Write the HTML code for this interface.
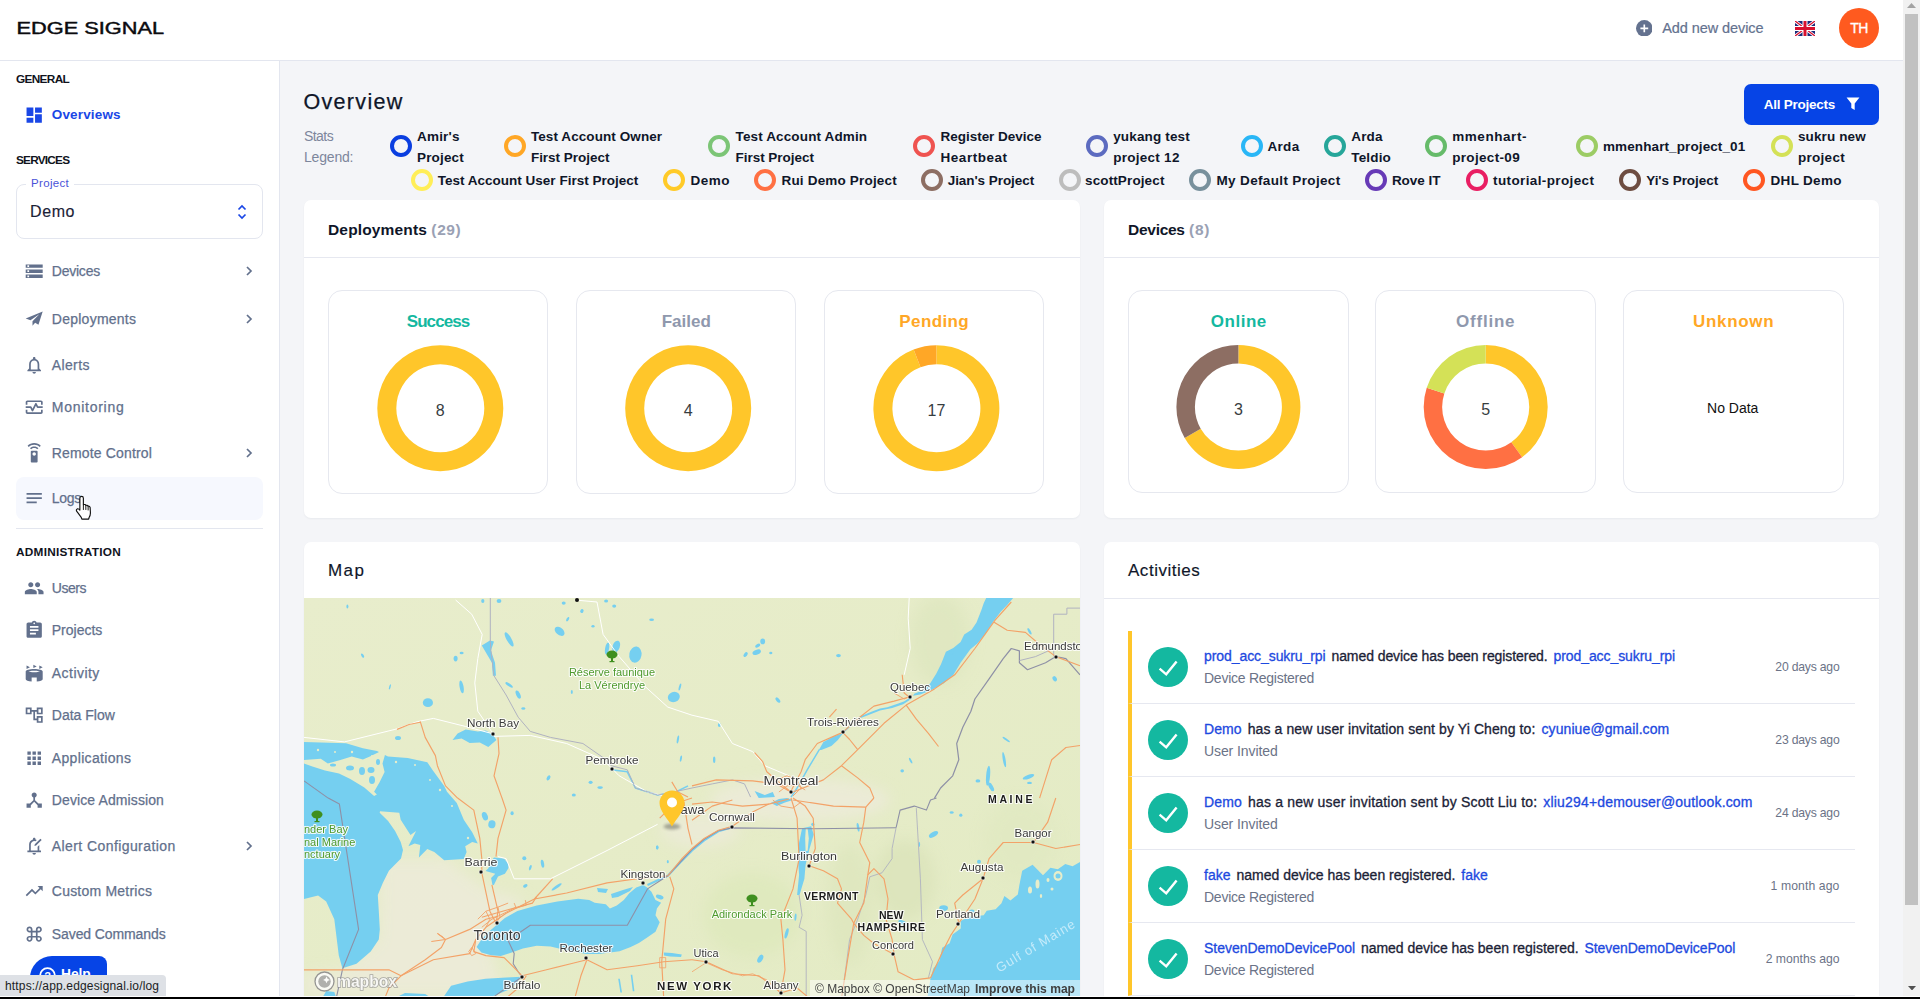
<!DOCTYPE html>
<html lang="en">
<head>
<meta charset="utf-8">
<title>Edge Signal - Overview</title>
<style>
*{box-sizing:border-box;margin:0;padding:0}
html,body{width:1920px;height:999px;overflow:hidden;background:#f4f5f8;font-family:"Liberation Sans",sans-serif;color:#0f1629}
body{position:relative}
a{text-decoration:none;color:#1d49e0}
span,b,a{white-space:nowrap}
.abs{position:absolute}
/* header */
#hdr{position:absolute;left:0;top:0;width:1903px;height:61px;background:#fff;border-bottom:1px solid #e3e6ef}
#logo{position:absolute;left:16px;top:18px}
#add{position:absolute;left:1635.700px;top:19px;height:18px;display:flex;align-items:center;color:#64728f;font-size:14.500px;-webkit-text-stroke:.2px #64728f}
#add svg{margin-right:10px}
#flag{position:absolute;left:1795px;top:21px}
#ava{position:absolute;left:1839px;top:8px;width:40px;height:40px;border-radius:50%;background:#ff5a1f;color:#fff;font-size:14px;text-align:center;line-height:40px;-webkit-text-stroke:.3px #fff}
/* sidebar */
#side{position:absolute;left:0;top:61px;width:280px;height:938px;background:#fff;border-right:1px solid #e3e6ef}
.sec{position:absolute;left:16px;font-size:11.800px;font-weight:700;line-height:14px;color:#10131c}
.it{position:absolute;left:16px;width:247px;height:42px;border-radius:8px;color:#62708c;font-size:14px;-webkit-text-stroke:.25px #62708c}
.it svg.ic{position:absolute;left:7.800px;top:10.900px;width:20.400px;height:20.400px;fill:#62708c}
.it span{position:absolute;left:35.800px;top:11.700px;line-height:18px;white-space:nowrap}
.it svg.ch{position:absolute;left:225.700px;top:14px;width:14px;height:14px;fill:none;stroke:#62708c;stroke-width:1.700}
.it.act{color:#1a47e6;font-weight:700;font-size:13.500px;-webkit-text-stroke:0}
.it.act svg.ic{fill:#1a47e6}
.it.hov{background:#f6f8fe;height:43px}
#proj{position:absolute;left:16px;top:123px;width:247px;height:55px;border:1px solid #e3e6ef;border-radius:8px}
#proj .lb{position:absolute;left:9px;top:-8px;background:#fff;padding:0 5px;font-size:11.500px;color:#4a52d8}
#proj .val{position:absolute;left:13px;top:18px;font-size:16px;color:#1b2236;-webkit-text-stroke:.15px #1b2236}
#help{position:absolute;left:30px;top:895px;width:77px;height:50px;border-radius:22px 8px 0 0;background:#0644e6;color:#fff;font-weight:700;font-size:13.800px}
#help svg{position:absolute;left:9px;top:11px}
#help span{position:absolute;left:31px;top:11px}
#url{position:absolute;left:0;top:914px;width:166px;height:22px;background:#dee1e6;border-radius:0 4px 0 0;font-size:12px;line-height:22px;padding-left:5px;color:#202124;white-space:nowrap}
/* main */
h1{position:absolute;left:303.500px;top:86.700px;font-size:21.500px;font-weight:400;color:#0f1629;line-height:30px;-webkit-text-stroke:.25px #0f1629}
#allp{position:absolute;left:1744px;top:84px;width:135px;height:41px;border-radius:7px;background:#0644e6;color:#fff;font-size:13.500px;font-weight:700}
#allp span{position:absolute;left:19.700px;top:12px;line-height:17px}
.card{position:absolute;background:#fff;border-radius:7px;box-shadow:0 1px 2px rgba(20,30,60,.05)}
.card .hd{position:absolute;left:24px;top:19.800px;font-size:15.500px;line-height:20px;color:#0f1629}
.card .hr{position:absolute;left:0;right:0;top:57px;height:1px;background:#e6e8f0}
.mini{position:absolute;top:90px;width:220px;height:203px;border:1px solid #e6e8ef;border-radius:14px}
.mini .t{position:absolute;left:0;right:0;top:19.700px;text-align:center;font-size:17px;font-weight:700;line-height:22px}
.mini svg{position:absolute;left:0;top:0}
.g{color:#14b8a0}.gr{color:#8f98ad}.o{color:#ffa726}
.lg0{position:absolute;font-size:14px;line-height:21px;color:#7d869c}
.lg{position:absolute;font-size:13.500px;font-weight:700;line-height:21.300px;color:#0f1629;white-space:nowrap}
.ring{position:absolute;width:22px;height:22px;border-radius:50%;border:4.200px solid #000}
.cnt{color:#9aa1b4}
.hd2{position:absolute;left:24px;top:18px;font-size:17px;line-height:22px;color:#0f1629;-webkit-text-stroke:.15px #0f1629}
.av{position:absolute;left:1128px;width:727px;height:73px;border-left:4px solid #ffc62a;border-bottom:1px solid #e6e8f0}
.av .ck{position:absolute;left:16px;top:16px}
.av .l1{position:absolute;left:72px;top:16px;font-size:14px;line-height:18px;color:#1b2236;white-space:nowrap;-webkit-text-stroke:.3px}
.av .l1 .a1{margin-right:2px}.av .l1 .a2{margin-left:2px}
.av .l2{position:absolute;left:72px;top:38px;font-size:14px;line-height:18px;color:#6b7387;white-space:nowrap}
.av .tm{position:absolute;right:15.500px;top:26.800px;font-size:12.200px;line-height:18px;color:#6b7387;white-space:nowrap}
/* scrollbar */
#sb{position:absolute;left:1903px;top:0;width:17px;height:997px;background:#f1f1f1}
#sb .th{position:absolute;left:2px;top:13.500px;width:13px;height:891.500px;background:#c1c1c1}
#bar{position:absolute;left:0;top:996px;width:1920px;height:3px;background:#000;border-top:1px solid #fff}
</style>
<style id="fit">
#g0{letter-spacing:-0.648px}
#g1{letter-spacing:-0.765px}
#g2{letter-spacing:0.257px}
#s0{letter-spacing:0.157px}
#s1{letter-spacing:-0.233px}
#s2{letter-spacing:0.250px}
#s3{letter-spacing:0.361px}
#s4{letter-spacing:0.725px}
#s5{letter-spacing:0.158px}
#s6{letter-spacing:-0.286px}
#s7{letter-spacing:-0.491px}
#s8{letter-spacing:-0.011px}
#s9{letter-spacing:0.451px}
#s10{letter-spacing:0.009px}
#s11{letter-spacing:0.327px}
#s12{letter-spacing:0.107px}
#s13{letter-spacing:0.414px}
#s14{letter-spacing:0.220px}
#s15{letter-spacing:-0.098px}
#hp{letter-spacing:-0.069px}
#ur{letter-spacing:0.162px}
#h1{letter-spacing:1.313px}
#ap{letter-spacing:-0.235px}
#st0{letter-spacing:-0.552px}
#st1{letter-spacing:-0.185px}
#l0a{letter-spacing:0.163px}
#l0b{letter-spacing:0.136px}
#l1a{letter-spacing:0.083px}
#l1b{letter-spacing:-0.007px}
#l2a{letter-spacing:0.137px}
#l2b{letter-spacing:-0.023px}
#l3a{letter-spacing:-0.022px}
#l3b{letter-spacing:0.540px}
#l4a{letter-spacing:0.157px}
#l4b{letter-spacing:0.269px}
#l5a{letter-spacing:0.311px}
#l6a{letter-spacing:0.145px}
#l6b{letter-spacing:0.150px}
#l7a{letter-spacing:0.567px}
#l7b{letter-spacing:0.330px}
#l8a{letter-spacing:0.105px}
#l9a{letter-spacing:0.115px}
#l9b{letter-spacing:0.281px}
#l10a{letter-spacing:0.010px}
#l11a{letter-spacing:0.461px}
#l12a{letter-spacing:0.178px}
#l13a{letter-spacing:-0.058px}
#l14a{letter-spacing:0.124px}
#l15a{letter-spacing:0.348px}
#l16a{letter-spacing:-0.044px}
#l17a{letter-spacing:0.382px}
#l18a{letter-spacing:-0.045px}
#l19a{letter-spacing:0.319px}
#c0{letter-spacing:0.156px}
#c1{letter-spacing:0.607px}
#c2{letter-spacing:-0.268px}
#c3{letter-spacing:0.773px}
#c4{letter-spacing:1.411px}
#c5{letter-spacing:0.525px}
#m0{letter-spacing:-0.917px}
#m1{letter-spacing:0.015px}
#m2{letter-spacing:0.373px}
#m3{letter-spacing:0.519px}
#m4{letter-spacing:0.776px}
#m5{letter-spacing:0.700px}
#a0{letter-spacing:-0.075px}
#a1{letter-spacing:0.097px}
#a2{letter-spacing:0.174px}
#a3{letter-spacing:0.007px}
#a4{letter-spacing:-0.034px}
#b0{letter-spacing:-0.256px}
#b1{letter-spacing:-0.091px}
#b2{letter-spacing:-0.091px}
#b3{letter-spacing:-0.256px}
#b4{letter-spacing:-0.256px}
#t0{letter-spacing:-0.202px}
#t1{letter-spacing:-0.202px}
#t2{letter-spacing:-0.202px}
#t3{letter-spacing:0.103px}
#t4{letter-spacing:-0.005px}
#ad{letter-spacing:-0.083px}
#th{letter-spacing:-0.672px}
#pl{letter-spacing:0.334px}
#pv{letter-spacing:0.604px}
</style>
</head>
<body>
<div id="hdr">
 <svg id="logo" width="152" height="20" viewBox="0 0 152 20"><text x="0.5" y="15.5" font-family="Liberation Sans, sans-serif" font-size="17" fill="#0b0b0f" stroke="#0b0b0f" stroke-width=".45" textLength="147.500" lengthAdjust="spacingAndGlyphs">EDGE SIGNAL</text></svg>
 <div id="add"><svg width="16.600" height="16.600" viewBox="0 0 17 17"><circle cx="8.500" cy="8.500" r="8.500" fill="#64728f"/><path d="M8.500 4.500v8M4.500 8.500h8" stroke="#fff" stroke-width="1.700"/></svg><span id="ad">Add new device</span></div>
 <svg id="flag" width="20" height="15" viewBox="0 0 60 45"><rect width="60" height="45" fill="#1b2a7a"/><path d="M0 0L60 45M60 0L0 45" stroke="#fff" stroke-width="9"/><path d="M0 0L60 45M60 0L0 45" stroke="#d8102e" stroke-width="4"/><path d="M30 0V45M0 22.500H60" stroke="#fff" stroke-width="15"/><path d="M30 0V45M0 22.500H60" stroke="#d8102e" stroke-width="9"/></svg>
 <div id="ava"><span id="th">TH</span></div>
</div>
<div id="side">
<!--SIDE-->
<div class="sec" style="top:11px"><span id="g0">GENERAL</span></div>
<div class="sec" style="top:92px"><span id="g1">SERVICES</span></div>
<div id="proj"><div class="lb"><span id="pl">Project</span></div><div class="val"><span id="pv">Demo</span></div><svg class="abs" style="left:219px;top:18px" width="12" height="18" viewBox="0 0 12 18"><path d="M2.500 6.500L6 3l3.500 3.500M2.500 11.500L6 15l3.500-3.500" fill="none" stroke="#1a47e6" stroke-width="1.7"/></svg></div>
<div class="abs" style="left:16px;top:467px;width:247px;height:1px;background:#e3e6ef"></div>
<div class="sec" style="top:484px"><span id="g2">ADMINISTRATION</span></div>
<div class="it act" style="top:33px"><svg class="ic" viewBox="0 0 24 24"><path d="M3 13h8V3H3v10zm0 8h8v-6H3v6zm10 0h8V11h-8v10zm0-18v6h8V3h-8z"/></svg><span id="s0">Overviews</span></div>
<div class="it " style="top:189px"><svg class="ic" viewBox="0 0 24 24"><path d="M2 20h20v-4H2v4zm2-3h2v2H4v-2zM2 4v4h20V4H2zm4 3H4V5h2v2zm-4 7h20v-4H2v4zm2-3h2v2H4v-2z"/></svg><span id="s1">Devices</span><svg class="ch" viewBox="0 0 14 14"><path d="M5 3l4 4-4 4"/></svg></div>
<div class="it " style="top:237px"><svg class="ic" viewBox="0 0 24 24"><path d="M22 3L2 11.2l5.6 2.1L18 6.2l-8 8.1v5.5l3.1-3.6 3.9 2.3z"/></svg><span id="s2">Deployments</span><svg class="ch" viewBox="0 0 14 14"><path d="M5 3l4 4-4 4"/></svg></div>
<div class="it " style="top:283px"><svg class="ic" viewBox="0 0 24 24"><path d="M12 22c1.1 0 2-.9 2-2h-4c0 1.1.9 2 2 2zm6-6v-5c0-3.07-1.63-5.64-4.5-6.32V4c0-.83-.67-1.500-1.500-1.500S10.500 3.170 10.500 4v.68C7.640 5.360 6 7.920 6 11v5l-2 2v1h16v-1l-2-2zm-2 1H8v-6c0-2.480 1.510-4.500 4-4.500s4 2.020 4 4.500v6z"/></svg><span id="s3">Alerts</span></div>
<div class="it " style="top:325px"><svg class="ic" viewBox="0 0 24 24"><path d="M20 4H4c-1.100 0-2 .9-2 2v3h2V6h16v3h2V6c0-1.100-.9-2-2-2zm0 14H4v-3H2v3c0 1.100.9 2 2 2h16c1.100 0 2-.9 2-2v-3h-2v3zM14.890 7.550c-.340-.680-1.450-.680-1.790 0L10 13.760l-1.110-2.210A.988.988 0 008 11H2v2h5.380l1.720 3.450c.18.340.52.550.9.550s.72-.210.890-.550L14 10.240l1.110 2.210c.17.340.51.550.890.550h6v-2h-5.380l-1.730-3.450z"/></svg><span id="s4">Monitoring</span></div>
<div class="it " style="top:371px"><svg class="ic" viewBox="0 0 24 24"><path d="M15 9H9c-.55 0-1 .45-1 1v12c0 .55.45 1 1 1h6c.55 0 1-.45 1-1V10c0-.55-.45-1-1-1zm-3 6c-1.100 0-2-.9-2-2s.9-2 2-2 2 .9 2 2-.9 2-2 2zM7.050 6.050l1.410 1.410C9.370 6.560 10.620 6 12 6s2.630.560 3.540 1.460l1.410-1.410C15.680 4.780 13.930 4 12 4s-3.680.780-4.950 2.050zM12 0C8.960 0 6.210 1.230 4.220 3.220l1.410 1.410C7.260 3.010 9.510 2 12 2s4.740 1.010 6.360 2.640l1.410-1.410C17.790 1.230 15.040 0 12 0z"/></svg><span id="s5">Remote Control</span><svg class="ch" viewBox="0 0 14 14"><path d="M5 3l4 4-4 4"/></svg></div>
<div class="it hov" style="top:416px"><svg class="ic" viewBox="0 0 24 24"><path d="M3 18h12v-2H3v2zM3 6v2h18V6H3zm0 7h18v-2H3v2z"/></svg><span id="s6">Logs</span></div>
<div class="it " style="top:506px"><svg class="ic" viewBox="0 0 24 24"><path d="M16 11c1.660 0 2.990-1.340 2.990-3S17.660 5 16 5c-1.660 0-3 1.340-3 3s1.340 3 3 3zm-8 0c1.660 0 2.990-1.340 2.990-3S9.660 5 8 5C6.340 5 5 6.340 5 8s1.340 3 3 3zm0 2c-2.330 0-7 1.170-7 3.500V19h14v-2.500c0-2.330-4.670-3.500-7-3.500zm8 0c-.29 0-.62.020-.970.050 1.160.840 1.970 1.970 1.970 3.450V19h6v-2.500c0-2.330-4.670-3.500-7-3.500z"/></svg><span id="s7">Users</span></div>
<div class="it " style="top:548px"><svg class="ic" viewBox="0 0 24 24"><path d="M19 3h-4.180C14.400 1.840 13.300 1 12 1c-1.300 0-2.400.840-2.820 2H5c-1.100 0-2 .9-2 2v14c0 1.100.9 2 2 2h14c1.100 0 2-.9 2-2V5c0-1.100-.9-2-2-2zm-7 0c.55 0 1 .45 1 1s-.45 1-1 1-1-.45-1-1 .45-1 1-1zm2 14H7v-2h7v2zm3-4H7v-2h10v2zm0-4H7V7h10v2z"/></svg><span id="s8">Projects</span></div>
<div class="it " style="top:591px"><svg class="ic" viewBox="0 0 24 24"><path d="M7 5L3 7V3l4 2zm11-2v4l4-2-4-2zm-7-1v4l4-2-4-2zm-6 8.040C6.380 10.530 8.770 11 12 11s5.620-.470 7-.960C19 9.860 16.220 9 12 9s-7 .860-7 1.040zM15 17H9v4.880C4.940 21.490 2 20.340 2 19v-9c0-1.660 4.480-3 10-3s10 1.340 10 3v9c0 1.340-2.940 2.480-7 2.870V17z"/></svg><span id="s9">Activity</span></div>
<div class="it " style="top:633px"><svg class="ic" viewBox="0 0 24 24"><path d="M22 11V3h-7v3H9V3H2v8h7V8h2v10h4v3h7v-8h-7v3h-2V8h2v3h7zM7 9H4V5h3v4zm10 6h3v4h-3v-4zm0-10h3v4h-3V5z"/></svg><span id="s10">Data Flow</span></div>
<div class="it " style="top:676px"><svg class="ic" viewBox="0 0 24 24"><path d="M4 8h4V4H4v4zm6 12h4v-4h-4v4zm-6 0h4v-4H4v4zm0-6h4v-4H4v4zm6 0h4v-4h-4v4zm6-10v4h4V4h-4zm-6 4h4V4h-4v4zm6 6h4v-4h-4v4zm0 6h4v-4h-4v4z"/></svg><span id="s11">Applications</span></div>
<div class="it " style="top:718px"><svg class="ic" viewBox="0 0 24 24"><path d="M17 16l-4-4V8.820C14.160 8.400 15 7.300 15 6c0-1.660-1.340-3-3-3S9 4.340 9 6c0 1.300.840 2.400 2 2.820V12l-4 4H3v5h5v-3.050l4-4.200 4 4.200V21h5v-5h-4z"/></svg><span id="s12">Device Admission</span></div>
<div class="it " style="top:764px"><svg class="ic" viewBox="0 0 24 24"><path d="M10 20h4c0 1.100-.9 2-2 2s-2-.9-2-2zm-6-1v-2h2v-7c0-2.790 1.910-5.140 4.500-5.800V3.500C10.500 2.670 11.170 2 12 2s1.500.67 1.500 1.500v.7c.56.14 1.080.36 1.570.65L13.600 6.320A4 4 0 008 10v7h8v-4.300l2-2V17h2v2H4zM19.300 3.200l1.500 1.500-6.600 6.600-1.900.4.400-1.900 6.600-6.600z"/></svg><span id="s13">Alert Configuration</span><svg class="ch" viewBox="0 0 14 14"><path d="M5 3l4 4-4 4"/></svg></div>
<div class="it " style="top:809px"><svg class="ic" viewBox="0 0 24 24"><path d="M16 6l2.290 2.290-4.880 4.880-4-4L2 16.590 3.410 18l6-6 4 4 6.300-6.290L22 12V6z"/></svg><span id="s14">Custom Metrics</span></div>
<div class="it " style="top:852px"><svg class="ic" viewBox="0 0 24 24"><path d="M17.500 3C15.570 3 14 4.570 14 6.500V8h-4V6.500C10 4.570 8.430 3 6.500 3S3 4.570 3 6.500 4.570 10 6.500 10H8v4H6.500C4.570 14 3 15.570 3 17.500S4.570 21 6.500 21s3.500-1.570 3.500-3.500V16h4v1.500c0 1.930 1.570 3.500 3.500 3.500s3.500-1.570 3.500-3.500-1.570-3.500-3.500-3.500H16v-4h1.500c1.930 0 3.500-1.570 3.500-3.500S19.430 3 17.500 3zM16 8V6.500c0-.83.67-1.500 1.500-1.500s1.500.67 1.500 1.500S18.330 8 17.500 8H16zM6.500 8C5.670 8 5 7.330 5 6.500S5.670 5 6.500 5 8 5.670 8 6.500V8H6.500zm3.500 6v-4h4v4h-4zm7.500 5c-.83 0-1.500-.67-1.500-1.500V16h1.500c.83 0 1.500.67 1.500 1.500s-.67 1.500-1.500 1.500zm-11 0c-.83 0-1.500-.67-1.500-1.500S5.670 16 6.500 16H8v1.500c0 .83-.67 1.500-1.500 1.500z"/></svg><span id="s15">Saved Commands</span></div>
<div id="help"><svg width="17" height="17" viewBox="0 0 17 17"><circle cx="8.500" cy="8.500" r="7.400" fill="none" stroke="#fff" stroke-width="1.800"/><text x="8.500" y="12.500" text-anchor="middle" font-family="Liberation Sans, sans-serif" font-size="11" font-weight="700" fill="#fff">?</text></svg><span id="hp">Help</span></div>
<div id="url"><span id="ur">https://app.edgesignal.io/log</span></div>
<!--/SIDE-->
</div>
<!--MAIN-->
<h1><span id="h1">Overview</span></h1>
<div id="allp"><span id="ap">All Projects</span><svg class="abs" style="left:102px;top:13.300px" width="14" height="13.400" viewBox="0 0 15 15"><path d="M0.300 0.500h14.400L9.400 7.400V14.500L5.600 12.200V7.400z" fill="#fff"/></svg></div>
<div class="lg0" style="left:304px;top:126px"><span id="st0">Stats</span><br><span id="st1">Legend:</span></div>
<div class="ring" style="left:390px;top:135px;border-color:#0a3ee0"></div>
<div class="lg" style="left:417.1px;top:125.5px"><span id="l0a">Amir's</span><br><span id="l0b">Project</span></div>
<div class="ring" style="left:504px;top:135px;border-color:#ffa726"></div>
<div class="lg" style="left:530.9px;top:125.5px"><span id="l1a">Test Account Owner</span><br><span id="l1b">First Project</span></div>
<div class="ring" style="left:708px;top:135px;border-color:#7cc576"></div>
<div class="lg" style="left:735.5px;top:125.5px"><span id="l2a">Test Account Admin</span><br><span id="l2b">First Project</span></div>
<div class="ring" style="left:913px;top:135px;border-color:#ef5350"></div>
<div class="lg" style="left:940.5px;top:125.5px"><span id="l3a">Register Device</span><br><span id="l3b">Heartbeat</span></div>
<div class="ring" style="left:1086px;top:135px;border-color:#5c6bc0"></div>
<div class="lg" style="left:1113.2px;top:125.5px"><span id="l4a">yukang test</span><br><span id="l4b">project 12</span></div>
<div class="ring" style="left:1241px;top:135px;border-color:#29b6f6"></div>
<div class="lg" style="left:1267.5px;top:136px"><span id="l5a">Arda</span></div>
<div class="ring" style="left:1324px;top:135px;border-color:#26a69a"></div>
<div class="lg" style="left:1351.3px;top:125.5px"><span id="l6a">Arda</span><br><span id="l6b">Teldio</span></div>
<div class="ring" style="left:1425px;top:135px;border-color:#66bb6a"></div>
<div class="lg" style="left:1452.2px;top:125.5px"><span id="l7a">mmenhart-</span><br><span id="l7b">project-09</span></div>
<div class="ring" style="left:1576px;top:135px;border-color:#9ccc65"></div>
<div class="lg" style="left:1603.0px;top:136px"><span id="l8a">mmenhart_project_01</span></div>
<div class="ring" style="left:1771px;top:135px;border-color:#d4e157"></div>
<div class="lg" style="left:1798.0px;top:125.5px"><span id="l9a">sukru new</span><br><span id="l9b">project</span></div>
<div class="ring" style="left:411px;top:169px;border-color:#ffee58"></div>
<div class="lg" style="left:437.7px;top:170px"><span id="l10a">Test Account User First Project</span></div>
<div class="ring" style="left:663px;top:169px;border-color:#ffca28"></div>
<div class="lg" style="left:690.5px;top:170px"><span id="l11a">Demo</span></div>
<div class="ring" style="left:754px;top:169px;border-color:#ff7043"></div>
<div class="lg" style="left:781.5px;top:170px"><span id="l12a">Rui Demo Project</span></div>
<div class="ring" style="left:921px;top:169px;border-color:#8d6e63"></div>
<div class="lg" style="left:947.7px;top:170px"><span id="l13a">Jian's Project</span></div>
<div class="ring" style="left:1059px;top:169px;border-color:#bdbdbd"></div>
<div class="lg" style="left:1085.0px;top:170px"><span id="l14a">scottProject</span></div>
<div class="ring" style="left:1189px;top:169px;border-color:#78909c"></div>
<div class="lg" style="left:1216.5px;top:170px"><span id="l15a">My Default Project</span></div>
<div class="ring" style="left:1365px;top:169px;border-color:#673ab7"></div>
<div class="lg" style="left:1391.9px;top:170px"><span id="l16a">Rove IT</span></div>
<div class="ring" style="left:1466px;top:169px;border-color:#e91e63"></div>
<div class="lg" style="left:1493.0px;top:170px"><span id="l17a">tutorial-project</span></div>
<div class="ring" style="left:1619px;top:169px;border-color:#6d4c41"></div>
<div class="lg" style="left:1646.2px;top:170px"><span id="l18a">Yi's Project</span></div>
<div class="ring" style="left:1743px;top:169px;border-color:#ff5722"></div>
<div class="lg" style="left:1770.5px;top:170px"><span id="l19a">DHL Demo</span></div>
<div class="card" style="left:304px;top:200px;width:776px;height:318px"><div class="hd"><b id="c0">Deployments</b> <b class="cnt" id="c1">(29)</b></div><div class="hr"></div>
<div class="mini" style="left:24px;height:204.200px"><div class="t g" style="margin-top:0.3px"><span id="m0">Success</span></div><svg width="218" height="201" viewBox="0 0 218 201" style="top:0.7px"><path d="M111.3 53.2A63 63 0 1 1 111.28999999999999 53.2zM111.3 72.2A44 44 0 1 0 111.31 72.2z" fill="#ffc62a" fill-rule="evenodd"/><text x="111.3" y="123.8" text-anchor="middle" font-family="Liberation Sans, sans-serif" font-size="16" fill="#373d3f">8</text></svg></div>
<div class="mini" style="left:272.3px;height:204.200px"><div class="t gr" style="margin-top:0.3px"><span id="m1">Failed</span></div><svg width="218" height="201" viewBox="0 0 218 201" style="top:0.7px"><path d="M111.2 53.2A63 63 0 1 1 111.19 53.2zM111.2 72.2A44 44 0 1 0 111.21000000000001 72.2z" fill="#ffc62a" fill-rule="evenodd"/><text x="111.2" y="123.8" text-anchor="middle" font-family="Liberation Sans, sans-serif" font-size="16" fill="#373d3f">4</text></svg></div>
<div class="mini" style="left:520.2px;height:204.200px"><div class="t o" style="margin-top:0.3px"><span id="m2">Pending</span></div><svg width="218" height="201" viewBox="0 0 218 201" style="top:0.7px"><path d="M111.40 53.20A63 63 0 1 1 88.64 57.45L95.51 75.17A44 44 0 1 0 111.40 72.20z" fill="#ffc62a"/><path d="M88.64 57.45A63 63 0 0 1 111.40 53.20L111.40 72.20A44 44 0 0 0 95.51 75.17z" fill="#ffa726"/><text x="111.4" y="123.8" text-anchor="middle" font-family="Liberation Sans, sans-serif" font-size="16" fill="#373d3f">17</text></svg></div>
</div>
<div class="card" style="left:1104px;top:200px;width:775px;height:318px"><div class="hd"><b id="c2">Devices</b> <b class="cnt" id="c3">(8)</b></div><div class="hr"></div>
<div class="mini" style="left:24.4px;width:220.800px"><div class="t g" style="margin-top:0.3px"><span id="m3">Online</span></div><svg width="218" height="201" viewBox="0 0 218 201" style="top:0.5px"><path d="M109.40 53.00A62 62 0 1 1 55.71 146.00L71.73 136.75A43.5 43.5 0 1 0 109.40 71.50z" fill="#ffc62a"/><path d="M55.71 146.00A62 62 0 0 1 109.40 53.00L109.40 71.50A43.5 43.5 0 0 0 71.73 136.75z" fill="#8d6e63"/><text x="109.4" y="122.8" text-anchor="middle" font-family="Liberation Sans, sans-serif" font-size="16" fill="#373d3f">3</text></svg></div>
<div class="mini" style="left:271.3px;width:220.800px"><div class="t gr" style="margin-top:0.3px"><span id="m4">Offline</span></div><svg width="218" height="201" viewBox="0 0 218 201" style="top:0.5px"><path d="M109.70 53.00A62 62 0 0 1 146.14 165.16L135.27 150.19A43.5 43.5 0 0 0 109.70 71.50z" fill="#ffc62a"/><path d="M146.14 165.16A62 62 0 0 1 50.73 95.84L68.33 101.56A43.5 43.5 0 0 0 135.27 150.19z" fill="#ff7043"/><path d="M50.73 95.84A62 62 0 0 1 109.70 53.00L109.70 71.50A43.5 43.5 0 0 0 68.33 101.56z" fill="#d4e157"/><text x="109.7" y="122.8" text-anchor="middle" font-family="Liberation Sans, sans-serif" font-size="16" fill="#373d3f">5</text></svg></div>
<div class="mini" style="left:519.3px;width:220.800px"><div class="t o" style="margin-top:0.3px"><span id="m5">Unknown</span></div><svg width="218" height="201" viewBox="0 0 218 201" style="top:0px"><text x="108.7" y="121.7" text-anchor="middle" font-family="Liberation Sans, sans-serif" font-size="14" fill="#111">No Data</text></svg></div>
</div>
<div class="card" style="left:304px;top:542px;width:776px;height:460px;overflow:hidden"><div class="hd2"><span id="c4">Map</span></div>
<!--MAP-->
<svg class="abs" style="left:0;top:56px" width="776" height="400" viewBox="304 598 776 400" font-family="Liberation Sans, sans-serif">
<defs><linearGradient id="lg1" x1="0" y1="0" x2="1" y2="1"><stop offset="0" stop-color="#e8edcc"/><stop offset=".5" stop-color="#e6ecc8"/><stop offset="1" stop-color="#e3ebc4"/></linearGradient></defs>
<rect x="304" y="598" width="776" height="400" fill="url(#lg1)"/>
<defs><filter id="bl" x="-20%" y="-20%" width="140%" height="140%"><feGaussianBlur stdDeviation="7"/></filter></defs>
<g filter="url(#bl)">
<path d="M380.8 858.6L445.5 858.6L485.9 888.9L526.3 899.0L485.9 939.5L506.1 997.1L304.0 997.1L304.0 973.8L344.4 969.8L378.8 939.5z" fill="#ecebd8" opacity=".9"/>
<ellipse cx="752" cy="915" rx="48" ry="42" fill="#dfe9be"/>
<ellipse cx="850" cy="905" rx="22" ry="60" fill="#dde6bd" opacity=".8"/>
<ellipse cx="905" cy="880" rx="30" ry="40" fill="#dbe4ba" opacity=".8"/>
<ellipse cx="940" cy="640" rx="30" ry="45" fill="#dde6bd" opacity=".7"/>
<ellipse cx="1020" cy="840" rx="35" ry="40" fill="#dfe8c0" opacity=".7"/>
<ellipse cx="800" cy="800" rx="90" ry="22" fill="#ecebd8" opacity=".9"/>
<ellipse cx="700" cy="830" rx="40" ry="18" fill="#ecebd8" opacity=".8"/>
</g>
<path d="M304.0 742.0L346.0 743.3L362.9 748.2L376.9 751.0L388.0 756.6L407.7 758.0L427.3 762.2L432.9 770.6L444.2 786.0L447.0 791.7L456.8 802.9L463.8 819.7L472.2 832.3L477.8 843.5L472.2 842.1L465.2 846.3L466.6 851.9L463.8 858.9L444.2 860.3L434.3 851.9L427.3 849.1L418.9 857.5L420.3 844.9L414.7 843.5L408.4 846.3L416.1 830.9L410.5 835.1L400.7 819.7L399.3 812.7L380.0 811.3L379.7 812.7L388.1 821.1L395.1 830.9L400.7 842.1L403.0 850.0L401.0 858.6L388.9 870.8L382.8 882.9L377.8 895.0L378.8 911.2L379.8 929.4L378.8 939.5L370.7 951.6L356.5 963.7L342.4 968.2L338.8 955.6L334.3 919.3L326.2 901.5L318.1 895.4L304.0 899.0z" fill="#75cff0" />
<path d="M304.0 760.1L320.8 758.7L327.8 763.6L340.4 760.1L351.7 756.6L362.9 759.4L369.9 756.6L381.1 751.0L385.3 753.8L382.5 763.6L384.6 772.0L379.7 781.9L374.1 791.7L376.9 794.5L374.1 795.9L364.3 787.5L350.3 779.1L339.0 773.4L325.0 770.6L312.4 766.4L304.0 763.6z" fill="#e7edca" />
<ellipse cx="350" cy="768" rx="4" ry="2.5" fill="#75cff0"/>
<ellipse cx="362" cy="771" rx="3" ry="4" fill="#75cff0"/>
<ellipse cx="371" cy="770" rx="3.5" ry="3" fill="#75cff0"/>
<ellipse cx="372" cy="780" rx="3" ry="4" fill="#75cff0"/>
<ellipse cx="378" cy="762" rx="2" ry="3" fill="#75cff0"/>
<ellipse cx="333" cy="765" rx="3" ry="1.5" fill="#75cff0"/>
<circle cx="318" cy="750" r="1.2" fill="#e7edca"/>
<circle cx="335" cy="752" r="1" fill="#e7edca"/>
<circle cx="352" cy="752" r="1.2" fill="#e7edca"/>
<circle cx="372" cy="756" r="1" fill="#e7edca"/>
<circle cx="396" cy="762" r="1.2" fill="#e7edca"/>
<circle cx="415" cy="765" r="1" fill="#e7edca"/>
<circle cx="440" cy="790" r="1.2" fill="#e7edca"/>
<circle cx="452" cy="806" r="1" fill="#e7edca"/>
<circle cx="468" cy="838" r="1.2" fill="#e7edca"/>
<circle cx="430" cy="780" r="1" fill="#e7edca"/>
<path d="M476.6 947.0L480.1 941.5L487.0 933.2L496.6 924.9L504.9 918.0L517.4 911.1L536.7 905.6L557.4 901.4L578.2 898.7L589.2 900.1L594.7 902.8L605.8 904.2L609.9 908.4L616.8 905.6L623.8 900.1L629.3 893.2L636.2 887.6L643.1 884.9L647.2 887.6L651.4 891.8L655.5 900.1L661.1 902.8L656.9 908.4L655.5 915.3L659.7 922.2L655.5 931.8L647.2 937.4L638.9 942.9L630.7 947.0L619.6 951.2L598.9 953.9L586.0 953.9L564.3 949.8L550.5 946.4L536.7 945.7L522.9 948.4L511.8 952.6L500.8 956.0L491.1 955.3L481.4 952.6z" fill="#75cff0" />
<path d="M597.0 888.0L608.0 889.0L606.0 893.0L598.0 892.0z" fill="#75cff0" />
<path d="M611.0 894.0L623.0 890.0L633.0 887.0L630.0 891.0L618.0 897.0L612.0 898.0z" fill="#75cff0" />
<path d="M442.8 998.0L451.1 985.7L467.6 981.6L485.6 978.8L506.3 977.4L521.5 976.7L517.4 981.6L511.8 988.5L504.9 991.2L488.4 998.0z" fill="#75cff0" />
<path d="M322.2 998.1L326.2 991.0L334.3 992.0L336.3 998.1z" fill="#75cff0" />
<path d="M394.9 998.1L405.0 993.0L425.2 994.0L431.3 998.1z" fill="#75cff0" />
<path d="M492.5 884.9L491.1 878.0L495.3 873.8L485.6 871.1L488.4 868.3L492.0 860.0L494.0 857.5L504.0 858.5L508.4 864.0L508.4 868.3L504.9 873.8L498.0 876.6L493.9 884.9z" fill="#75cff0" />
<path d="M663.8 952.6L672.0 953.0L681.8 954.5L681.0 957.0L670.0 956.5L664.0 955.5z" fill="#75cff0" />
<path d="M618.2 978.8L619.8 978.8L622.0 992.6L620.4 992.6z" fill="#75cff0" />
<path d="M630.7 974.7L632.3 974.7L634.4 991.2L632.8 991.2z" fill="#75cff0" />
<path d="M452.5 739.9L457.6 733.4L465.7 729.4L477.8 731.4L485.9 730.4L492.9 734.4L496.4 739.9L488.3 746.9L479.8 742.5L469.7 742.9L461.6 738.4z" fill="#75cff0" />
<path d="M481.8 645.5L489.9 640.4L494.0 641.4L490.9 650.5L495.0 662.7L496.0 675.8L492.9 675.8L491.9 662.7L485.9 652.6z" fill="#75cff0" />
<ellipse cx="427.9" cy="702.7" rx="5.1" ry="4.4" fill="#75cff0" transform="rotate(0 427.9 702.7)"/>
<ellipse cx="461.6" cy="686.9" rx="2.0" ry="6.5" fill="#75cff0" transform="rotate(-10 461.6 686.9)"/>
<ellipse cx="509.1" cy="639.4" rx="2.4" ry="8.1" fill="#75cff0" transform="rotate(-30 509.1 639.4)"/>
<ellipse cx="559.6" cy="631.3" rx="5.7" ry="3.6" fill="#75cff0" transform="rotate(40 559.6 631.3)"/>
<ellipse cx="635.4" cy="654.6" rx="6.1" ry="8.1" fill="#75cff0" transform="rotate(10 635.4 654.6)"/>
<ellipse cx="616.2" cy="646.5" rx="3.6" ry="6.1" fill="#75cff0" transform="rotate(20 616.2 646.5)"/>
<ellipse cx="607.1" cy="648.5" rx="2.0" ry="6.1" fill="#75cff0" transform="rotate(10 607.1 648.5)"/>
<ellipse cx="673.8" cy="697.0" rx="6.1" ry="5.1" fill="#75cff0" transform="rotate(-20 673.8 697.0)"/>
<ellipse cx="455.6" cy="658.6" rx="2.0" ry="2.8" fill="#75cff0" transform="rotate(0 455.6 658.6)"/>
<ellipse cx="461.6" cy="653.0" rx="2.0" ry="1.2" fill="#75cff0" transform="rotate(0 461.6 653.0)"/>
<ellipse cx="518.2" cy="694.6" rx="2.0" ry="4.4" fill="#75cff0" transform="rotate(-25 518.2 694.6)"/>
<ellipse cx="509.1" cy="684.9" rx="4.4" ry="1.4" fill="#75cff0" transform="rotate(35 509.1 684.9)"/>
<ellipse cx="398.0" cy="738.0" rx="3.0" ry="2.0" fill="#75cff0" transform="rotate(0 398.0 738.0)"/>
<ellipse cx="362.6" cy="655.6" rx="1.2" ry="2.4" fill="#75cff0" transform="rotate(-30 362.6 655.6)"/>
<ellipse cx="347.4" cy="606.5" rx="1.0" ry="2.0" fill="#75cff0" transform="rotate(0 347.4 606.5)"/>
<ellipse cx="389.9" cy="686.9" rx="0.8" ry="2.8" fill="#75cff0" transform="rotate(15 389.9 686.9)"/>
<ellipse cx="567.7" cy="619.2" rx="1.2" ry="2.4" fill="#75cff0" transform="rotate(30 567.7 619.2)"/>
<ellipse cx="581.9" cy="611.1" rx="1.6" ry="2.0" fill="#75cff0" transform="rotate(30 581.9 611.1)"/>
<ellipse cx="563.7" cy="603.1" rx="2.0" ry="1.6" fill="#75cff0" transform="rotate(0 563.7 603.1)"/>
<ellipse cx="499.0" cy="601.0" rx="2.4" ry="2.0" fill="#75cff0" transform="rotate(0 499.0 601.0)"/>
<ellipse cx="482.8" cy="601.0" rx="1.6" ry="2.0" fill="#75cff0" transform="rotate(0 482.8 601.0)"/>
<ellipse cx="606.1" cy="601.0" rx="2.0" ry="1.6" fill="#75cff0" transform="rotate(0 606.1 601.0)"/>
<ellipse cx="614.2" cy="606.1" rx="2.0" ry="1.6" fill="#75cff0" transform="rotate(0 614.2 606.1)"/>
<ellipse cx="593.0" cy="626.3" rx="1.6" ry="1.2" fill="#75cff0" transform="rotate(0 593.0 626.3)"/>
<ellipse cx="651.6" cy="619.8" rx="2.4" ry="1.2" fill="#75cff0" transform="rotate(0 651.6 619.8)"/>
<ellipse cx="679.9" cy="686.9" rx="1.0" ry="3.6" fill="#75cff0" transform="rotate(15 679.9 686.9)"/>
<ellipse cx="677.9" cy="739.5" rx="1.0" ry="4.0" fill="#75cff0" transform="rotate(10 677.9 739.5)"/>
<ellipse cx="680.9" cy="758.7" rx="1.0" ry="3.2" fill="#75cff0" transform="rotate(10 680.9 758.7)"/>
<ellipse cx="548.5" cy="777.9" rx="1.6" ry="2.8" fill="#75cff0" transform="rotate(30 548.5 777.9)"/>
<ellipse cx="590.6" cy="782.3" rx="2.0" ry="1.6" fill="#75cff0" transform="rotate(0 590.6 782.3)"/>
<ellipse cx="600.1" cy="787.6" rx="2.8" ry="1.4" fill="#75cff0" transform="rotate(0 600.1 787.6)"/>
<ellipse cx="573.8" cy="795.0" rx="2.0" ry="1.6" fill="#75cff0" transform="rotate(0 573.8 795.0)"/>
<ellipse cx="523.3" cy="708.5" rx="2.0" ry="1.2" fill="#75cff0" transform="rotate(0 523.3 708.5)"/>
<ellipse cx="571.8" cy="692.0" rx="1.0" ry="2.0" fill="#75cff0" transform="rotate(0 571.8 692.0)"/>
<ellipse cx="484.9" cy="816.2" rx="2.8" ry="4.4" fill="#75cff0" transform="rotate(-20 484.9 816.2)"/>
<ellipse cx="491.9" cy="824.3" rx="3.6" ry="4.0" fill="#75cff0" transform="rotate(10 491.9 824.3)"/>
<ellipse cx="512.1" cy="813.2" rx="1.6" ry="2.0" fill="#75cff0" transform="rotate(0 512.1 813.2)"/>
<ellipse cx="524.3" cy="858.2" rx="2.0" ry="2.0" fill="#75cff0" transform="rotate(0 524.3 858.2)"/>
<ellipse cx="542.5" cy="863.7" rx="1.6" ry="4.0" fill="#75cff0" transform="rotate(-10 542.5 863.7)"/>
<ellipse cx="530.3" cy="867.7" rx="1.2" ry="2.8" fill="#75cff0" transform="rotate(20 530.3 867.7)"/>
<ellipse cx="525.3" cy="885.9" rx="2.4" ry="1.6" fill="#75cff0" transform="rotate(-30 525.3 885.9)"/>
<ellipse cx="556.6" cy="886.9" rx="6.1" ry="1.4" fill="#75cff0" transform="rotate(-35 556.6 886.9)"/>
<ellipse cx="657.2" cy="847.5" rx="1.2" ry="2.0" fill="#75cff0" transform="rotate(0 657.2 847.5)"/>
<ellipse cx="659.7" cy="897.0" rx="4.0" ry="2.0" fill="#75cff0" transform="rotate(20 659.7 897.0)"/>
<ellipse cx="667.8" cy="861.7" rx="1.0" ry="1.6" fill="#75cff0" transform="rotate(0 667.8 861.7)"/>
<ellipse cx="657.2" cy="847.5" rx="1.2" ry="2.0" fill="#75cff0" transform="rotate(0 657.2 847.5)"/>
<path d="M1013.1 598.0L1007.0 605.3L1000.9 611.4L993.6 621.2L985.0 634.6L977.7 643.2L970.4 649.3L960.6 662.7L953.3 674.9L943.5 683.5L932.5 689.6L920.3 694.5L913.0 695.7L914.2 693.8L921.5 690.8L930.1 683.5L936.2 673.7L941.1 663.9L945.9 651.7L953.3 648.1L960.6 642.0L964.2 634.6L971.6 629.7L976.5 622.4L981.3 610.2L983.8 602.9L986.2 598.0z" fill="#75cff0" />
<path d="M910.0 697.5L904.4 701.2L898.3 703.6L887.3 707.3L880.0 708.5L872.0 711.5L860.0 716.5L858.0 719.0L866.0 716.0L880.0 710.6L892.2 707.9L903.2 704.2L912.0 698.5z" fill="#75cff0" />
<path d="M818.9 750.0L823.4 741.9L833.5 736.6L843.2 733.0L837.9 739.9L831.4 745.9L821.3 750.0z" fill="#75cff0" />
<path d="M842.6 733.0L857.7 718.6" fill="none" stroke="#75cff0" stroke-width="1.5" stroke-linejoin="round" />
<path d="M819.3 749.6L807.2 769.8L797.1 788.0L791.0 797.1" fill="none" stroke="#75cff0" stroke-width="1.5" stroke-linejoin="round" />
<path d="M770.8 803.1L778.9 799.0L787.0 798.0L793.0 800.0L785.0 802.4L776.9 806.1z" fill="#75cff0" />
<path d="M754.6 791.0L764.8 795.0L772.8 792.0L774.9 797.1L758.7 798.1z" fill="#75cff0" />
<path d="M647.5 884.9L667.8 875.8L679.9 862.7L692.0 850.5L692.0 850.5L704.1 840.4L718.3 831.3L732.4 827.3" fill="none" stroke="#75cff0" stroke-width="2.2" stroke-linejoin="round" />
<path d="M611.2 769.8L627.3 771.8L635.4 788.0L657.6 795.0L673.8 793.0L688.0 785.9" fill="none" stroke="#75cff0" stroke-width="1.6" stroke-linejoin="round" />
<ellipse cx="745.6" cy="654.6" rx="1.6" ry="2.8" fill="#75cff0" transform="rotate(40 745.6 654.6)"/>
<ellipse cx="756.7" cy="652.2" rx="4.4" ry="2.4" fill="#75cff0" transform="rotate(-20 756.7 652.2)"/>
<ellipse cx="762.7" cy="641.4" rx="2.4" ry="2.8" fill="#75cff0" transform="rotate(0 762.7 641.4)"/>
<ellipse cx="757.7" cy="645.7" rx="2.8" ry="1.6" fill="#75cff0" transform="rotate(-30 757.7 645.7)"/>
<ellipse cx="770.8" cy="653.0" rx="1.6" ry="1.2" fill="#75cff0" transform="rotate(0 770.8 653.0)"/>
<ellipse cx="838.5" cy="655.6" rx="2.4" ry="1.6" fill="#75cff0" transform="rotate(0 838.5 655.6)"/>
<ellipse cx="777.9" cy="700.1" rx="1.6" ry="3.2" fill="#75cff0" transform="rotate(-40 777.9 700.1)"/>
<ellipse cx="719.3" cy="724.9" rx="1.4" ry="2.0" fill="#75cff0" transform="rotate(0 719.3 724.9)"/>
<ellipse cx="714.2" cy="759.7" rx="1.2" ry="3.2" fill="#75cff0" transform="rotate(0 714.2 759.7)"/>
<ellipse cx="902.2" cy="770.8" rx="1.8" ry="1.6" fill="#75cff0" transform="rotate(0 902.2 770.8)"/>
<ellipse cx="910.7" cy="760.7" rx="1.0" ry="3.2" fill="#75cff0" transform="rotate(-30 910.7 760.7)"/>
<ellipse cx="1006.2" cy="739.5" rx="1.0" ry="4.4" fill="#75cff0" transform="rotate(-55 1006.2 739.5)"/>
<ellipse cx="1004.2" cy="759.7" rx="1.4" ry="7.7" fill="#75cff0" transform="rotate(-10 1004.2 759.7)"/>
<ellipse cx="988.1" cy="775.8" rx="2.0" ry="10.1" fill="#75cff0" transform="rotate(5 988.1 775.8)"/>
<ellipse cx="991.1" cy="786.9" rx="4.8" ry="2.0" fill="#75cff0" transform="rotate(60 991.1 786.9)"/>
<ellipse cx="977.9" cy="780.9" rx="2.4" ry="1.6" fill="#75cff0" transform="rotate(0 977.9 780.9)"/>
<ellipse cx="1028.5" cy="776.8" rx="6.1" ry="2.0" fill="#75cff0" transform="rotate(-20 1028.5 776.8)"/>
<ellipse cx="1029.5" cy="782.9" rx="2.4" ry="1.2" fill="#75cff0" transform="rotate(0 1029.5 782.9)"/>
<ellipse cx="1054.7" cy="678.8" rx="2.0" ry="2.8" fill="#75cff0" transform="rotate(-30 1054.7 678.8)"/>
<ellipse cx="1029.5" cy="631.3" rx="1.2" ry="3.6" fill="#75cff0" transform="rotate(-30 1029.5 631.3)"/>
<ellipse cx="951.7" cy="653.0" rx="2.4" ry="1.2" fill="#75cff0" transform="rotate(-20 951.7 653.0)"/>
<path d="M802.1 828.3L811.2 826.3L813.7 834.4L809.6 848.5L805.6 864.7L804.4 878.8L799.5 895.0L797.1 895.0L799.1 874.8L797.9 858.6L799.1 842.5z" fill="#75cff0" />
<ellipse cx="812.8" cy="824.3" rx="1.6" ry="1.6" fill="#75cff0" transform="rotate(0 812.8 824.3)"/>
<ellipse cx="858.1" cy="827.3" rx="1.2" ry="4.4" fill="#75cff0" transform="rotate(-10 858.1 827.3)"/>
<ellipse cx="933.5" cy="834.4" rx="5.1" ry="2.4" fill="#75cff0" transform="rotate(-30 933.5 834.4)"/>
<ellipse cx="951.7" cy="812.5" rx="2.0" ry="1.2" fill="#75cff0" transform="rotate(0 951.7 812.5)"/>
<ellipse cx="960.8" cy="815.2" rx="1.6" ry="1.6" fill="#75cff0" transform="rotate(0 960.8 815.2)"/>
<ellipse cx="919.3" cy="844.5" rx="0.8" ry="2.4" fill="#75cff0" transform="rotate(0 919.3 844.5)"/>
<ellipse cx="979.0" cy="861.7" rx="2.0" ry="2.0" fill="#75cff0" transform="rotate(0 979.0 861.7)"/>
<ellipse cx="943.6" cy="908.1" rx="4.4" ry="2.8" fill="#75cff0" transform="rotate(0 943.6 908.1)"/>
<ellipse cx="971.9" cy="911.2" rx="2.8" ry="1.6" fill="#75cff0" transform="rotate(0 971.9 911.2)"/>
<ellipse cx="902.2" cy="922.3" rx="4.0" ry="2.0" fill="#75cff0" transform="rotate(20 902.2 922.3)"/>
<ellipse cx="907.2" cy="930.4" rx="2.0" ry="1.6" fill="#75cff0" transform="rotate(0 907.2 930.4)"/>
<ellipse cx="786.6" cy="933.4" rx="1.6" ry="5.3" fill="#75cff0" transform="rotate(15 786.6 933.4)"/>
<ellipse cx="760.3" cy="958.7" rx="2.4" ry="4.4" fill="#75cff0" transform="rotate(30 760.3 958.7)"/>
<ellipse cx="795.5" cy="917.2" rx="1.0" ry="3.6" fill="#75cff0" transform="rotate(5 795.5 917.2)"/>
<path d="M805.8 828.3L807.6 827.9L808.8 838.4L807.6 850.9L805.6 850.9L805.2 838.4z" fill="#e7edca" />
<path d="M1080.0 861.9L1072.6 866.3L1065.2 864.1L1057.8 869.3L1050.4 867.8L1043.0 875.2L1032.6 864.8L1022.2 870.7L1019.3 885.6L1017.8 894.4L1010.4 900.4L1004.4 895.9L1001.5 903.3L995.6 909.3L986.7 910.7L983.7 915.2L968.9 916.7L960.7 921.1L960.7 928.5L952.6 934.4L949.6 943.3L942.2 947.8L939.3 961.1L933.3 968.5L930.4 978.9L927.4 998.0L1080.0 998.0z" fill="#75cff0" />
<ellipse cx="1037.5" cy="884" rx="2" ry="4.5" fill="#e7edca"/>
<ellipse cx="1030" cy="890" rx="2" ry="3.5" fill="#e7edca"/>
<ellipse cx="1058" cy="876" rx="4.5" ry="5" fill="#e7edca"/>
<ellipse cx="1048" cy="880" rx="1.5" ry="2" fill="#e7edca"/>
<ellipse cx="1041" cy="896" rx="1.2" ry="2" fill="#e7edca"/>
<ellipse cx="1052" cy="889" rx="1.5" ry="1.5" fill="#e7edca"/>
<circle cx="1058" cy="876" r="2.5" fill="#75cff0"/>
<!--ROADS-->
<path d="M304.0 737.4L344.4 741.9L394.9 729.4L417.2 721.7L433.3 718.4L465.7 726.5L492.9 733.8" fill="none" stroke="#ffffff" stroke-width="1" stroke-linejoin="round" />
<path d="M492.9 733.4L477.8 711.2L474.8 682.9L477.8 658.6L482.2 634.4L471.7 614.2L455.6 600.0" fill="none" stroke="#ffffff" stroke-width="1" stroke-linejoin="round" />
<path d="M494.0 736.4L530.3 735.4L566.7 743.5L603.1 759.7L619.2 775.8L647.5 792.0L673.8 798.1" fill="none" stroke="#ffffff" stroke-width="1" stroke-linejoin="round" />
<path d="M574.8 600.0L597.0 602.0L603.1 634.4L619.2 656.6L645.5 686.9L667.8 707.1L692.0 715.2" fill="none" stroke="#ffffff" stroke-width="1" stroke-linejoin="round" />
<path d="M692.0 715.2L718.3 721.3L732.4 743.5L752.6 751.6L764.8 765.7L789.0 775.8" fill="none" stroke="#ffffff" stroke-width="1" stroke-linejoin="round" />
<path d="M904.2 674.8L910.2 648.5L908.2 618.2L909.2 598.0" fill="none" stroke="#ffffff" stroke-width="1" stroke-linejoin="round" />
<path d="M657.6 824.3L607.1 850.5L550.5 878.8L514.2 878.8L506.1 858.6L498.0 856.6" fill="none" stroke="#ffffff" stroke-width="1" stroke-linejoin="round" />
<path d="M490.3 598.0L490.3 641.4L490.9 650.5L494.0 675.8L506.1 695.0L518.2 717.2L530.3 731.4L550.5 737.4L582.9 743.5L603.1 757.6L611.2 765.7L627.3 769.8L635.4 788.0L657.6 795.0L673.8 792.0L692.0 788.0" fill="none" stroke="#b0b2c0" stroke-width="1" stroke-linejoin="round" />
<path d="M692.0 788.0L712.2 783.9L732.4 779.9L744.5 783.9L750.6 797.1" fill="none" stroke="#b0b2c0" stroke-width="1" stroke-linejoin="round" />
<path d="M328.2 798.0L339.4 804.1L358.6 929.4L342.4 969.8L336.3 998.1" fill="none" stroke="#8e90a6" stroke-width="1.1" stroke-linejoin="round" />
<path d="M304.0 780.9L328.2 798.1" fill="none" stroke="#8e90a6" stroke-width="1.1" stroke-linejoin="round" />
<path d="M508.1 940.5L530.3 925.3L627.3 925.3L647.5 888.9L667.8 875.8L679.9 862.7L692.0 849.5" fill="none" stroke="#8e90a6" stroke-width="1.1" stroke-linejoin="round" />
<path d="M692.0 849.5L704.1 839.4L718.3 830.7L732.4 827.9L813.2 828.7L896.1 827.7" fill="none" stroke="#8e90a6" stroke-width="1.1" stroke-linejoin="round" />
<path d="M508.1 940.5L514.2 953.6L513.2 963.7L518.2 971.8L522.2 976.8L506.1 988.0L491.9 998.1" fill="none" stroke="#8e90a6" stroke-width="1.1" stroke-linejoin="round" />
<path d="M896.1 827.7L900.1 810.1L914.3 806.1L926.4 810.1L930.5 800.0L936.5 798.0" fill="none" stroke="#8e90a6" stroke-width="1.1" stroke-linejoin="round" />
<path d="M934.5 798.1L940.6 788.0L952.7 775.8L958.8 759.7L956.7 743.5L962.8 727.3L970.9 711.2L974.9 699.0L989.1 678.8L1003.2 658.6L1011.3 648.5L1019.4 650.9L1019.4 662.7L1027.5 669.7L1045.6 662.7L1055.8 656.6L1065.9 658.6L1080.0 674.8" fill="none" stroke="#8e90a6" stroke-width="1.2" stroke-linejoin="round" />
<path d="M1053.7 656.6L1053.7 614.2L1066.9 614.2L1066.9 608.1L1080.0 608.1" fill="none" stroke="#b0b2c0" stroke-width="1" stroke-linejoin="round" />
<path d="M1019.4 660.6L1035.5 656.6L1053.7 648.5" fill="none" stroke="#b0b2c0" stroke-width="1" stroke-linejoin="round" />
<path d="M896.1 827.7L892.1 848.5L892.1 858.6L882.0 872.8L869.8 876.8L865.8 895.0L857.7 919.2L849.6 939.5L845.6 969.8L841.5 998.1" fill="none" stroke="#b0b2c0" stroke-width="0.9" stroke-linejoin="round" />
<path d="M916.3 808.1L920.4 878.8L922.4 939.5L932.5 961.7L928.4 977.9" fill="none" stroke="#b0b2c0" stroke-width="0.9" stroke-linejoin="round" />
<path d="M799.1 895.0L802.1 915.2L799.1 927.3L806.2 931.4L806.2 998.1" fill="none" stroke="#b0b2c0" stroke-width="0.9" stroke-linejoin="round" />
<path d="M397.0 729.4L409.1 724.5L420.2 722.3" fill="none" stroke="#f3a268" stroke-width="1.15" stroke-linejoin="round" />
<path d="M420.2 721.3L425.2 737.4L435.4 755.6L437.4 765.7L445.5 785.9L457.6 798.1" fill="none" stroke="#f3a268" stroke-width="1.15" stroke-linejoin="round" />
<path d="M498.0 737.4L499.0 753.6L494.0 775.8L502.0 798.1" fill="none" stroke="#f3a268" stroke-width="1.15" stroke-linejoin="round" />
<path d="M457.6 798.0L473.8 810.1L479.8 838.4L481.8 858.6L481.8 872.8L489.9 911.2L496.0 923.3" fill="none" stroke="#f3a268" stroke-width="1.15" stroke-linejoin="round" />
<path d="M502.0 798.0L506.1 810.1L498.0 838.4L496.0 856.6" fill="none" stroke="#f3a268" stroke-width="1.15" stroke-linejoin="round" />
<path d="M491.9 884.9L498.0 911.2L496.0 923.3" fill="none" stroke="#f3a268" stroke-width="1.15" stroke-linejoin="round" />
<path d="M304.0 969.8L338.4 969.8L388.9 969.8L401.0 975.8L433.3 959.7L469.7 953.6L475.8 939.5L485.9 927.3L506.1 913.2L534.4 899.0L566.7 893.0L607.1 882.9L637.4 878.8L667.8 875.8L681.9 858.6L692.0 848.5" fill="none" stroke="#f3a268" stroke-width="1.15" stroke-linejoin="round" />
<path d="M692.0 848.5L704.1 838.4L718.3 830.3L732.4 826.3L752.6 812.1L768.8 804.1L789.0 799.0" fill="none" stroke="#f3a268" stroke-width="1.15" stroke-linejoin="round" />
<path d="M431.3 941.5L445.5 939.5L469.7 929.4L485.9 919.2L498.0 916.2" fill="none" stroke="#f3a268" stroke-width="1.15" stroke-linejoin="round" />
<path d="M437.4 933.4L445.5 939.5L441.4 947.5L425.2 959.7L401.0 975.8L388.9 988.0L384.8 998.1" fill="none" stroke="#f3a268" stroke-width="1.15" stroke-linejoin="round" />
<path d="M475.8 939.5L473.8 951.6L485.9 955.6L504.1 957.6L512.1 965.7L522.2 975.8" fill="none" stroke="#f3a268" stroke-width="1.15" stroke-linejoin="round" />
<path d="M534.4 899.0L552.6 878.8" fill="none" stroke="#f3a268" stroke-width="1.15" stroke-linejoin="round" />
<path d="M481.8 917.2L506.1 910.2L532.4 903.1L536.4 897.0" fill="none" stroke="#f3a268" stroke-width="1.15" stroke-linejoin="round" />
<path d="M522.2 975.8L546.5 969.8L570.8 963.7L586.9 959.7L607.1 969.8L637.4 965.7L663.7 961.7L692.0 959.7" fill="none" stroke="#f3a268" stroke-width="1.15" stroke-linejoin="round" />
<path d="M692.0 959.7L706.1 961.7L732.4 973.8L758.7 975.8L772.8 985.9L780.9 993.0" fill="none" stroke="#f3a268" stroke-width="1.15" stroke-linejoin="round" />
<path d="M586.9 959.7L580.9 975.8L574.8 998.1" fill="none" stroke="#f3a268" stroke-width="1.15" stroke-linejoin="round" />
<path d="M526.3 975.8L518.2 988.0L506.1 998.1" fill="none" stroke="#f3a268" stroke-width="1.15" stroke-linejoin="round" />
<path d="M663.7 998.1L661.7 961.7L665.7 919.2L673.8 888.9L669.8 876.8" fill="none" stroke="#f3a268" stroke-width="1.15" stroke-linejoin="round" />
<path d="M659.7 957.6L665.7 957.6L665.7 967.8L659.7 967.8L659.7 957.6" fill="none" stroke="#f3a268" stroke-width="0.8" stroke-linejoin="round" />
<path d="M671.8 781.9L677.9 792.0L688.0 797.1" fill="none" stroke="#f3a268" stroke-width="1.15" stroke-linejoin="round" />
<path d="M659.7 818.2L667.8 810.1L679.9 802.0L692.0 798.0" fill="none" stroke="#f3a268" stroke-width="1.15" stroke-linejoin="round" />
<path d="M683.9 802.0L688.0 828.3L692.0 844.5" fill="none" stroke="#f3a268" stroke-width="1.15" stroke-linejoin="round" />
<path d="M692.0 785.9L716.2 779.9L752.6 780.9L776.9 783.9L789.0 791.0" fill="none" stroke="#f3a268" stroke-width="1.15" stroke-linejoin="round" />
<path d="M692.0 804.1L712.2 802.0L742.5 806.1L768.8 804.1" fill="none" stroke="#f3a268" stroke-width="1.15" stroke-linejoin="round" />
<path d="M754.6 752.6L762.7 761.7L766.8 771.8L780.9 783.9L791.0 792.0" fill="none" stroke="#f3a268" stroke-width="1.15" stroke-linejoin="round" />
<path d="M793.0 792.0L823.4 779.9L841.5 765.7L857.7 749.6L884.0 723.3L906.2 705.1L934.5 688.9L954.7 674.8L974.9 648.5L995.1 620.2L1011.3 602.0" fill="none" stroke="#f3a268" stroke-width="1.15" stroke-linejoin="round" />
<path d="M791.0 791.0L801.1 771.8L805.2 759.7L817.3 743.5L842.6 732.4L859.7 717.2L873.9 706.1L894.1 701.1L909.2 697.0" fill="none" stroke="#f3a268" stroke-width="1.15" stroke-linejoin="round" />
<path d="M994.1 622.2L1007.2 630.3L1025.4 632.4L1039.6 644.5L1055.8 656.6L1080.0 665.7" fill="none" stroke="#f3a268" stroke-width="1.15" stroke-linejoin="round" />
<path d="M906.2 705.1L916.3 719.2L928.4 733.4L938.5 746.5" fill="none" stroke="#f3a268" stroke-width="1.15" stroke-linejoin="round" />
<path d="M842.6 732.4L849.6 739.5L857.7 749.6" fill="none" stroke="#f3a268" stroke-width="1.15" stroke-linejoin="round" />
<path d="M841.5 765.7L857.7 777.9L869.8 788.0L873.9 798.1" fill="none" stroke="#f3a268" stroke-width="1.15" stroke-linejoin="round" />
<path d="M829.4 717.2L836.5 709.1" fill="none" stroke="#f3a268" stroke-width="1.15" stroke-linejoin="round" />
<path d="M902.2 674.8L904.2 693.0L909.2 697.0" fill="none" stroke="#f3a268" stroke-width="1.15" stroke-linejoin="round" />
<path d="M791.0 798.0L797.1 818.2L799.1 858.6L793.0 888.9L780.9 919.2L782.9 939.5L785.0 969.8L780.9 993.0" fill="none" stroke="#f3a268" stroke-width="1.15" stroke-linejoin="round" />
<path d="M793.0 798.0L805.2 806.1L813.2 818.2L815.3 848.5L809.2 865.7" fill="none" stroke="#f3a268" stroke-width="1.15" stroke-linejoin="round" />
<path d="M809.2 865.7L823.4 870.8L837.5 878.8L841.5 888.9L837.5 903.1L851.6 919.2L853.7 923.3" fill="none" stroke="#f3a268" stroke-width="1.15" stroke-linejoin="round" />
<path d="M793.0 800.0L833.5 806.1L865.8 807.1L873.9 798.0" fill="none" stroke="#f3a268" stroke-width="1.15" stroke-linejoin="round" />
<path d="M865.8 807.1L863.8 822.2L859.7 842.5L869.8 862.7L867.8 874.8L863.8 903.1L853.7 923.3L847.6 959.7L841.5 998.1" fill="none" stroke="#f3a268" stroke-width="1.15" stroke-linejoin="round" />
<path d="M867.8 874.8L873.9 868.7L884.0 878.8L888.0 899.0L886.0 919.2L892.1 939.5L894.1 954.6L898.1 971.8L914.3 979.9L930.5 977.9" fill="none" stroke="#f3a268" stroke-width="1.15" stroke-linejoin="round" />
<path d="M853.7 923.3L863.8 935.4L873.9 943.5L894.1 954.6" fill="none" stroke="#f3a268" stroke-width="1.15" stroke-linejoin="round" />
<path d="M780.9 993.0L797.1 988.0L809.2 998.1" fill="none" stroke="#f3a268" stroke-width="1.15" stroke-linejoin="round" />
<path d="M930.5 977.9L942.6 951.6L950.7 935.4L958.8 923.3L954.7 903.1L962.8 895.0L983.0 878.8L989.1 858.6L1003.2 842.5L1033.5 842.5L1047.7 822.2L1055.8 798.0" fill="none" stroke="#f3a268" stroke-width="1.15" stroke-linejoin="round" />
<path d="M1039.6 798.1L1051.7 759.7L1065.9 747.5L1080.0 745.5" fill="none" stroke="#f3a268" stroke-width="1.15" stroke-linejoin="round" />
<path d="M958.8 923.3L974.9 899.0L983.0 878.8" fill="none" stroke="#f3a268" stroke-width="1.15" stroke-linejoin="round" />
<path d="M1033.5 842.5L1055.8 848.5L1080.0 844.5" fill="none" stroke="#f3a268" stroke-width="1.15" stroke-linejoin="round" />
<path d="M692.0 820.2L712.2 806.1L732.4 800.0" fill="none" stroke="#f3a268" stroke-width="1.15" stroke-linejoin="round" />
<path d="M692.0 971.8L706.1 962.7L722.3 969.8L742.5 975.8L752.6 973.8L766.8 979.9L780.9 993.0" fill="none" stroke="#f3a268" stroke-width="0.8" stroke-linejoin="round" />
<path d="M477.8 919.2L485.9 911.2L498.0 907.1L508.1 903.1" fill="none" stroke="#f3a268" stroke-width="0.9" stroke-linejoin="round" />
<path d="M481.8 927.3L491.9 919.2L504.1 913.2L516.2 907.1" fill="none" stroke="#f3a268" stroke-width="0.9" stroke-linejoin="round" />
<path d="M485.9 911.2L489.9 919.2L485.9 927.3" fill="none" stroke="#f3a268" stroke-width="0.9" stroke-linejoin="round" />
<path d="M498.0 907.1L500.0 917.2L495.0 924.3" fill="none" stroke="#f3a268" stroke-width="0.9" stroke-linejoin="round" />
<path d="M514.2 903.1L516.2 908.1L526.3 905.1L525.3 900.1" fill="none" stroke="#f3a268" stroke-width="0.9" stroke-linejoin="round" />
<path d="M437.4 933.4L443.4 937.4" fill="none" stroke="#f3a268" stroke-width="0.9" stroke-linejoin="round" />
<path d="M471.7 947.5L475.8 953.6L471.7 955.6L468.7 951.6L471.7 947.5" fill="none" stroke="#f3a268" stroke-width="0.9" stroke-linejoin="round" />
<path d="M776.9 779.9L787.0 775.8L797.1 779.9L801.1 788.0L793.0 796.0" fill="none" stroke="#f3a268" stroke-width="0.9" stroke-linejoin="round" />
<path d="M778.9 792.0L787.0 785.9L797.1 784.9L805.2 790.0" fill="none" stroke="#f3a268" stroke-width="0.9" stroke-linejoin="round" />
<path d="M772.8 800.0L780.9 806.1L793.0 808.1L801.1 802.0" fill="none" stroke="#f3a268" stroke-width="0.9" stroke-linejoin="round" />
<path d="M894.1 693.0L904.2 699.0L912.3 695.0" fill="none" stroke="#f3a268" stroke-width="0.9" stroke-linejoin="round" />
<!--LABELS-->
<text x="493" y="727.1" text-anchor="middle" font-size="11.5" fill="#3a3a3a" stroke="#fff" stroke-width="2.2" stroke-opacity=".85" paint-order="stroke" stroke-linejoin="round" textLength="52" lengthAdjust="spacingAndGlyphs">North Bay</text>
<circle cx="493" cy="734" r="2" fill="#111" stroke="#fff" stroke-width=".6"/>
<text x="612" y="764.1" text-anchor="middle" font-size="11.5" fill="#3a3a3a" stroke="#fff" stroke-width="2.2" stroke-opacity=".85" paint-order="stroke" stroke-linejoin="round" textLength="53" lengthAdjust="spacingAndGlyphs">Pembroke</text>
<circle cx="612" cy="769" r="2" fill="#111" stroke="#fff" stroke-width=".6"/>
<text x="910" y="691.1" text-anchor="middle" font-size="11.5" fill="#3a3a3a" stroke="#fff" stroke-width="2.2" stroke-opacity=".85" paint-order="stroke" stroke-linejoin="round" textLength="40" lengthAdjust="spacingAndGlyphs">Quebec</text>
<circle cx="910" cy="697" r="2" fill="#111" stroke="#fff" stroke-width=".6"/>
<text x="843" y="726.1" text-anchor="middle" font-size="11.5" fill="#3a3a3a" stroke="#fff" stroke-width="2.2" stroke-opacity=".85" paint-order="stroke" stroke-linejoin="round" textLength="72" lengthAdjust="spacingAndGlyphs">Trois-Rivières</text>
<circle cx="843" cy="732" r="2" fill="#111" stroke="#fff" stroke-width=".6"/>
<text x="791" y="784.9" text-anchor="middle" font-size="13.5" fill="#3a3a3a" stroke="#fff" stroke-width="2.2" stroke-opacity=".85" paint-order="stroke" stroke-linejoin="round" textLength="55" lengthAdjust="spacingAndGlyphs">Montreal</text>
<circle cx="791" cy="792" r="2" fill="#111" stroke="#fff" stroke-width=".6"/>
<text x="732" y="821.1" text-anchor="middle" font-size="11.5" fill="#3a3a3a" stroke="#fff" stroke-width="2.2" stroke-opacity=".85" paint-order="stroke" stroke-linejoin="round" textLength="46" lengthAdjust="spacingAndGlyphs">Cornwall</text>
<circle cx="732" cy="827" r="2" fill="#111" stroke="#fff" stroke-width=".6"/>
<text x="680.5" y="813.9" text-anchor="start" font-size="13.5" fill="#3a3a3a" stroke="#fff" stroke-width="2.2" stroke-opacity=".85" paint-order="stroke" stroke-linejoin="round" textLength="24" lengthAdjust="spacingAndGlyphs">awa</text>
<text x="1024" y="650.1" text-anchor="start" font-size="11.5" fill="#3a3a3a" stroke="#fff" stroke-width="2.2" stroke-opacity=".85" paint-order="stroke" stroke-linejoin="round" textLength="58" lengthAdjust="spacingAndGlyphs">Edmundsto</text>
<circle cx="1056" cy="657" r="2" fill="#111" stroke="#fff" stroke-width=".6"/>
<text x="1033" y="837.1" text-anchor="middle" font-size="11.5" fill="#3a3a3a" stroke="#fff" stroke-width="2.2" stroke-opacity=".85" paint-order="stroke" stroke-linejoin="round" textLength="37" lengthAdjust="spacingAndGlyphs">Bangor</text>
<circle cx="1033" cy="842" r="2" fill="#111" stroke="#fff" stroke-width=".6"/>
<text x="982" y="871.1" text-anchor="middle" font-size="11.5" fill="#3a3a3a" stroke="#fff" stroke-width="2.2" stroke-opacity=".85" paint-order="stroke" stroke-linejoin="round" textLength="43" lengthAdjust="spacingAndGlyphs">Augusta</text>
<circle cx="983" cy="878" r="2" fill="#111" stroke="#fff" stroke-width=".6"/>
<text x="958" y="918.1" text-anchor="middle" font-size="11.5" fill="#3a3a3a" stroke="#fff" stroke-width="2.2" stroke-opacity=".85" paint-order="stroke" stroke-linejoin="round" textLength="44" lengthAdjust="spacingAndGlyphs">Portland</text>
<circle cx="958" cy="924" r="2" fill="#111" stroke="#fff" stroke-width=".6"/>
<text x="893" y="949.1" text-anchor="middle" font-size="11.5" fill="#3a3a3a" stroke="#fff" stroke-width="2.2" stroke-opacity=".85" paint-order="stroke" stroke-linejoin="round" textLength="42" lengthAdjust="spacingAndGlyphs">Concord</text>
<circle cx="893" cy="954" r="2" fill="#111" stroke="#fff" stroke-width=".6"/>
<text x="809" y="860.1" text-anchor="middle" font-size="11.5" fill="#3a3a3a" stroke="#fff" stroke-width="2.2" stroke-opacity=".85" paint-order="stroke" stroke-linejoin="round" textLength="56" lengthAdjust="spacingAndGlyphs">Burlington</text>
<circle cx="809" cy="866" r="2" fill="#111" stroke="#fff" stroke-width=".6"/>
<text x="706" y="957.1" text-anchor="middle" font-size="11.5" fill="#3a3a3a" stroke="#fff" stroke-width="2.2" stroke-opacity=".85" paint-order="stroke" stroke-linejoin="round" textLength="25" lengthAdjust="spacingAndGlyphs">Utica</text>
<circle cx="706" cy="962" r="2" fill="#111" stroke="#fff" stroke-width=".6"/>
<text x="781" y="989.1" text-anchor="middle" font-size="11.5" fill="#3a3a3a" stroke="#fff" stroke-width="2.2" stroke-opacity=".85" paint-order="stroke" stroke-linejoin="round" textLength="35" lengthAdjust="spacingAndGlyphs">Albany</text>
<circle cx="781" cy="993" r="2" fill="#111" stroke="#fff" stroke-width=".6"/>
<text x="643" y="878.1" text-anchor="middle" font-size="11.5" fill="#3a3a3a" stroke="#fff" stroke-width="2.2" stroke-opacity=".85" paint-order="stroke" stroke-linejoin="round" textLength="45" lengthAdjust="spacingAndGlyphs">Kingston</text>
<circle cx="643" cy="883" r="2" fill="#111" stroke="#fff" stroke-width=".6"/>
<text x="481" y="866.1" text-anchor="middle" font-size="11.5" fill="#3a3a3a" stroke="#fff" stroke-width="2.2" stroke-opacity=".85" paint-order="stroke" stroke-linejoin="round" textLength="33" lengthAdjust="spacingAndGlyphs">Barrie</text>
<circle cx="481" cy="872" r="2" fill="#111" stroke="#fff" stroke-width=".6"/>
<text x="497" y="940.2" text-anchor="middle" font-size="14.5" fill="#3a3a3a" stroke="#fff" stroke-width="2.2" stroke-opacity=".85" paint-order="stroke" stroke-linejoin="round" textLength="47" lengthAdjust="spacingAndGlyphs">Toronto</text>
<circle cx="497" cy="923" r="2" fill="#111" stroke="#fff" stroke-width=".6"/>
<text x="586" y="952.1" text-anchor="middle" font-size="11.5" fill="#3a3a3a" stroke="#fff" stroke-width="2.2" stroke-opacity=".85" paint-order="stroke" stroke-linejoin="round" textLength="53" lengthAdjust="spacingAndGlyphs">Rochester</text>
<circle cx="586" cy="958" r="2" fill="#111" stroke="#fff" stroke-width=".6"/>
<text x="522" y="989.1" text-anchor="middle" font-size="11.5" fill="#3a3a3a" stroke="#fff" stroke-width="2.2" stroke-opacity=".85" paint-order="stroke" stroke-linejoin="round" textLength="37" lengthAdjust="spacingAndGlyphs">Buffalo</text>
<circle cx="522" cy="977" r="2" fill="#111" stroke="#fff" stroke-width=".6"/>
<circle cx="577" cy="600" r="2" fill="#111"/>
<text x="1011" y="802.8" text-anchor="middle" font-size="10.5" font-weight="700" fill="#1c1c1c" letter-spacing="1.6" stroke="#fff" stroke-width="2.2" stroke-opacity=".85" paint-order="stroke" stroke-linejoin="round" textLength="46" lengthAdjust="spacing">MAINE</text>
<text x="832" y="899.8" text-anchor="middle" font-size="10.5" font-weight="700" fill="#1c1c1c" letter-spacing="1.6" stroke="#fff" stroke-width="2.2" stroke-opacity=".85" paint-order="stroke" stroke-linejoin="round" textLength="56" lengthAdjust="spacing">VERMONT</text>
<text x="892" y="918.8" text-anchor="middle" font-size="10.5" font-weight="700" fill="#1c1c1c" letter-spacing="1.6" stroke="#fff" stroke-width="2.2" stroke-opacity=".85" paint-order="stroke" stroke-linejoin="round" textLength="26" lengthAdjust="spacing">NEW</text>
<text x="892" y="930.8" text-anchor="middle" font-size="10.5" font-weight="700" fill="#1c1c1c" letter-spacing="1.6" stroke="#fff" stroke-width="2.2" stroke-opacity=".85" paint-order="stroke" stroke-linejoin="round" textLength="69" lengthAdjust="spacing">HAMPSHIRE</text>
<text x="695" y="990.1" text-anchor="middle" font-size="11.5" font-weight="700" fill="#1c1c1c" letter-spacing="1.6" stroke="#fff" stroke-width="2.2" stroke-opacity=".85" paint-order="stroke" stroke-linejoin="round" textLength="76" lengthAdjust="spacing">NEW YORK</text>
<text x="612" y="676.0" text-anchor="middle" font-size="11" fill="#4f9a2e" stroke="#fff" stroke-width="2.2" stroke-opacity=".85" paint-order="stroke" stroke-linejoin="round">Réserve faunique</text>
<text x="612" y="688.5" text-anchor="middle" font-size="11" fill="#4f9a2e" stroke="#fff" stroke-width="2.2" stroke-opacity=".85" paint-order="stroke" stroke-linejoin="round">La Vérendrye</text>
<g fill="#3f8f1f"><ellipse cx="612" cy="654.5" rx="5.5" ry="4"/><rect x="611" y="656" width="2" height="6"/><rect x="609.5" y="661" width="5" height="1.2"/></g>
<text x="752" y="918.0" text-anchor="middle" font-size="11" fill="#4f9a2e" stroke="#fff" stroke-width="2.2" stroke-opacity=".85" paint-order="stroke" stroke-linejoin="round">Adirondack Park</text>
<g fill="#3f8f1f"><ellipse cx="752" cy="898.5" rx="5.5" ry="4"/><rect x="751" y="900" width="2" height="6"/><rect x="749.5" y="905" width="5" height="1.2"/></g>
<text x="304" y="833.0" text-anchor="start" font-size="11" fill="#4f9a2e" stroke="#fff" stroke-width="2.2" stroke-opacity=".85" paint-order="stroke" stroke-linejoin="round">nder Bay</text>
<text x="304" y="845.5" text-anchor="start" font-size="11" fill="#4f9a2e" stroke="#fff" stroke-width="2.2" stroke-opacity=".85" paint-order="stroke" stroke-linejoin="round">nal Marine</text>
<text x="304" y="858.0" text-anchor="start" font-size="11" fill="#4f9a2e" stroke="#fff" stroke-width="2.2" stroke-opacity=".85" paint-order="stroke" stroke-linejoin="round">nctuary</text>
<g fill="#3f8f1f"><ellipse cx="317" cy="814.5" rx="5.5" ry="4"/><rect x="316" y="816" width="2" height="6"/><rect x="314.5" y="821" width="5" height="1.2"/></g>
<text x="1036" y="950" text-anchor="middle" font-size="13" fill="#c4ebfa" letter-spacing="1" transform="rotate(-31 1036 946)">Gulf of Maine</text>
<defs><filter id="sh" x="-50%" y="-100%" width="200%" height="300%"><feGaussianBlur stdDeviation="1.6"/></filter></defs><ellipse cx="672" cy="826.500" rx="8.500" ry="3" fill="#000" opacity=".3" filter="url(#sh)"/>
<path d="M672 826.500C668 819 659.500 811 659.500 803A12.500 12.500 0 0 1 684.500 803C684.500 811 676 819 672 826.500z" fill="#ffc62a"/><circle cx="672" cy="802.500" r="5" fill="#fff"/>
<g opacity=".9"><circle cx="324.500" cy="981.500" r="9.500" fill="#fff" fill-opacity=".85" stroke="#8c8c8c" stroke-width="1.3"/><circle cx="324.500" cy="981.500" r="6.200" fill="#8c8c8c" fill-opacity=".75"/><path d="M326.500 976.500l1.100 2.300 2.300 1.100-2.300 1.100-1.100 2.300-1.100-2.300-2.300-1.100 2.300-1.100z" fill="#fff"/><text x="337" y="987" font-size="17" font-weight="700" fill="#fff" fill-opacity=".9" stroke="#8c8c8c" stroke-width="1.700" stroke-opacity=".8" paint-order="stroke" textLength="60" lengthAdjust="spacingAndGlyphs">mapbox</text></g>
<rect x="810" y="980" width="270" height="18" fill="#fff" fill-opacity=".5"/>
<text x="815" y="993" font-size="12" fill="#404040" textLength="155" lengthAdjust="spacingAndGlyphs">© Mapbox © OpenStreetMap</text><text x="975" y="993" font-size="12" font-weight="700" fill="#404040" textLength="100" lengthAdjust="spacingAndGlyphs">Improve this map</text>
<!--/LABELS-->
<!--/ROADS-->
</svg>
<!--/MAP-->
</div>
<div class="card" style="left:1104px;top:542px;width:775px;height:460px"><div class="hd2"><span id="c5">Activities</span></div><div class="hr" style="top:56px"></div></div>
<div class="av" style="top:631px"><svg class="ck" width="40" height="40" viewBox="0 0 40 40"><circle cx="20" cy="20" r="20" fill="#14b8a0"/><path d="M11.600 21.700L18.200 27.300 28.600 14.400" fill="none" stroke="#fff" stroke-width="2.400"/></svg><div class="l1"><span id="a0"><a class="a1">prod_acc_sukru_rpi</a> named device has been registered. <a class="a2">prod_acc_sukru_rpi</a></span></div><div class="l2"><span id="b0">Device Registered</span></div><div class="tm"><span id="t0">20 days ago</span></div></div>
<div class="av" style="top:704px"><svg class="ck" width="40" height="40" viewBox="0 0 40 40"><circle cx="20" cy="20" r="20" fill="#14b8a0"/><path d="M11.600 21.700L18.200 27.300 28.600 14.400" fill="none" stroke="#fff" stroke-width="2.400"/></svg><div class="l1"><span id="a1"><a class="a1">Demo</a> has a new user invitation sent by Yi Cheng to: <a class="a2">cyuniue@gmail.com</a></span></div><div class="l2"><span id="b1">User Invited</span></div><div class="tm"><span id="t1">23 days ago</span></div></div>
<div class="av" style="top:777px"><svg class="ck" width="40" height="40" viewBox="0 0 40 40"><circle cx="20" cy="20" r="20" fill="#14b8a0"/><path d="M11.600 21.700L18.200 27.300 28.600 14.400" fill="none" stroke="#fff" stroke-width="2.400"/></svg><div class="l1"><span id="a2"><a class="a1">Demo</a> has a new user invitation sent by Scott Liu to: <a class="a2">xliu294+demouser@outlook.com</a></span></div><div class="l2"><span id="b2">User Invited</span></div><div class="tm"><span id="t2">24 days ago</span></div></div>
<div class="av" style="top:850px"><svg class="ck" width="40" height="40" viewBox="0 0 40 40"><circle cx="20" cy="20" r="20" fill="#14b8a0"/><path d="M11.600 21.700L18.200 27.300 28.600 14.400" fill="none" stroke="#fff" stroke-width="2.400"/></svg><div class="l1"><span id="a3"><a class="a1">fake</a> named device has been registered. <a class="a2">fake</a></span></div><div class="l2"><span id="b3">Device Registered</span></div><div class="tm"><span id="t3">1 month ago</span></div></div>
<div class="av" style="top:923px"><svg class="ck" width="40" height="40" viewBox="0 0 40 40"><circle cx="20" cy="20" r="20" fill="#14b8a0"/><path d="M11.600 21.700L18.200 27.300 28.600 14.400" fill="none" stroke="#fff" stroke-width="2.400"/></svg><div class="l1"><span id="a4"><a class="a1">StevenDemoDevicePool</a> named device has been registered. <a class="a2">StevenDemoDevicePool</a></span></div><div class="l2"><span id="b4">Device Registered</span></div><div class="tm"><span id="t4">2 months ago</span></div></div>
<!--/MAIN-->
<svg class="abs" style="left:75px;top:495px" width="19.400" height="26.400" viewBox="0 0 22 30"><path d="M7.500 1.500c1.200 0 2 .900 2 2.100v7.400l.600-.100c.900-.400 1.900.100 2.200 1 .900-.500 2.100-.100 2.500.900 1.100-.400 2.300.300 2.400 1.600l.300 5.600c.100 2.300-.500 4-1.500 5.600l-.500 1.900H7.800l-.700-2.100C5.200 23.100 3.600 20.600 2 18.600c-.800-1-.500-2.300.600-2.800 1-.400 1.900.100 2.900 1.400V3.600c0-1.200.800-2.100 2-2.100z" fill="#fff" stroke="#111" stroke-width="1.300" stroke-linejoin="round"/><path d="M9.500 11v6M12.300 12v5M14.900 13v4.500" stroke="#111" stroke-width="1.100" fill="none"/></svg>
<div id="sb"><div class="th"></div>
<svg class="abs" style="left:4px;top:3px" width="9" height="5"><path d="M0 5L4.500 0L9 5z" fill="#a3a3a3"/></svg>
<svg class="abs" style="left:4.500px;top:985.500px" width="8" height="4.500" viewBox="0 0 9 5"><path d="M0 0L4.500 5L9 0z" fill="#505050"/></svg>
</div>
<div id="bar"></div>
</body>
</html>
